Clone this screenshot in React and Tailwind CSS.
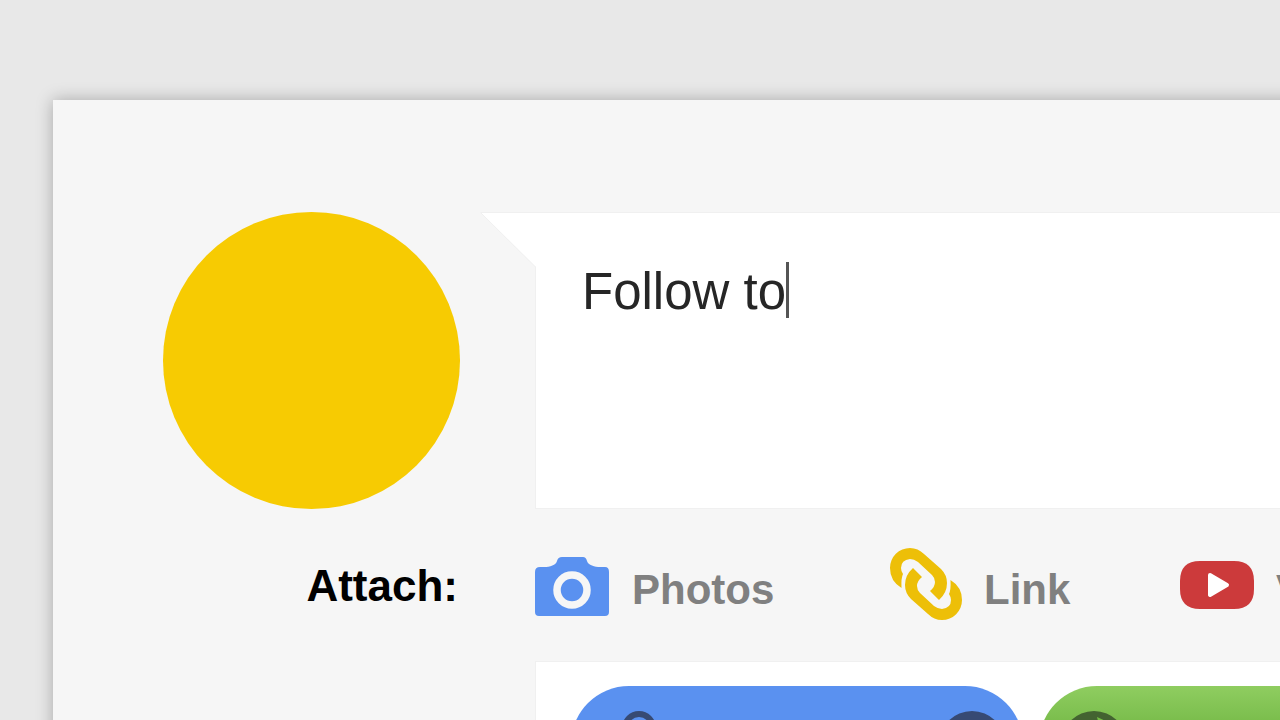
import React, { useState } from 'react';

const CameraIcon = () => (
  <svg viewBox="0 -3 75 63" className="h-[63px] w-[75px]" aria-hidden="true">
    <path
      fill="#5a91f0"
      d="M22 4Q23 0 27 0H48Q51 0 52 4C53 8 60 10 65 10H70Q74 10 74 15V55Q74 59 70 59H4Q0 59 0 55V15Q0 10 5 10H9C15 10 21 8 22 4Z"
    />
    <circle cx="37" cy="33" r="15" fill="none" stroke="#f6f6f6" strokeWidth="7.5" />
  </svg>
);

const LinkIcon = () => (
  <svg viewBox="0 1 73 75" className="h-[75px] w-[73px]" aria-hidden="true">
    <g fill="#edbf08">
      <path
        id="chain"
        d="M12.500 41Q1 34 1 21A20 20 0 0 1 21 1Q29 1 35 7L52 22Q58 28 58 36Q58 46 50 53L41 44Q46 40 46 35Q46 31 43 28L29 15Q25 12 21 12Q12 13 12 21Q12 24 14 27Q12 31 12.500 41Z"
      />
      <use href="#chain" transform="rotate(180 37 37)" />
    </g>
  </svg>
);

const VideoIcon = () => (
  <svg viewBox="0 0 74 48" className="h-12 w-[74px]" aria-hidden="true">
    <path
      fill="#cc3a3b"
      d="M20 0H54Q74 0 74 20V28Q74 48 54 48H20Q0 48 0 28V20Q0 0 20 0Z"
    />
    <path d="M30 14L47 24L30 34Z" fill="#fff" stroke="#fff" strokeWidth="4" strokeLinejoin="round" />
  </svg>
);

const PersonIcon = () => (
  <svg viewBox="0 0 66 66" className="size-[66px]" aria-hidden="true">
    <circle cx="33" cy="17" r="14" fill="none" stroke="#374a73" strokeWidth="6" />
    <path d="M6 66Q8 40 33 40T60 66" fill="none" stroke="#374a73" strokeWidth="6" />
  </svg>
);

const CloseIcon = () => (
  <svg viewBox="0 0 66 66" className="size-[66px]" aria-hidden="true">
    <circle cx="33" cy="33" r="33" fill="#374a73" />
    <path d="M22 22L44 44M44 22L22 44" stroke="#5a91f0" strokeWidth="7" />
  </svg>
);

const GlobeIcon = () => (
  <svg viewBox="0 0 66 66" className="size-[66px]" aria-hidden="true">
    <circle cx="33" cy="33" r="33" fill="#436331" />
    <path d="M36 6L49 12L41 17L44 24L32 30L22 40L12 30L20 18L38 14Z" fill="#74bd43" />
  </svg>
);

const attachments = [
  { name: 'Photos', icon: <CameraIcon />, className: 'w-[354px]' },
  { name: 'Link', icon: <LinkIcon />, className: 'w-[291px]' },
  { name: 'Video', icon: <VideoIcon />, className: '' },
];

export default function App() {
  const [post, setPost] = useState('Follow to');

  return (
    <div className="h-screen overflow-hidden bg-[#e8e8e8] pt-[100px] pl-[53px] font-['Liberation_Sans',Arial,sans-serif]">
      <main className="-mr-8 grid min-h-full grid-cols-[298px_1fr] content-start gap-x-[74px] bg-[#f6f6f6] pt-28 pl-[110px] shadow-[0_0_16px_rgba(0,0,0,0.28)]">
        <div className="size-[297px] rounded-full bg-[#f7cb02]" />

        {/* Message bubble */}
        <div className="relative h-[297px] border border-r-0 border-[#f0f0f0] bg-white pt-[49px] pl-[46px]">
          <svg viewBox="0 0 57 56" className="absolute -top-px -left-[56px] h-[56px] w-[57px]" aria-hidden="true">
            <path d="M0 0H57V56Z" fill="#fff" />
            <path d="M57 .5H.5L56 55.5" fill="none" stroke="#f0f0f0" />
          </svg>
          <div className="flex items-start">
            <textarea
              aria-label="Message"
              rows={1}
              value={post}
              onChange={(e) => setPost(e.target.value)}
              className="field-sizing-content resize-none overflow-hidden whitespace-nowrap text-[51px] leading-[60px] text-[#262626] outline-none"
            />
            <span className="h-14 w-[3px] bg-[#555]" />
          </div>
        </div>

        {/* Attachment types */}
        <h2 className="flex h-[152px] items-center justify-end pt-[2px] pr-[3px] text-[44px] font-bold text-black">Attach:</h2>
        <div className="flex h-[152px] items-center overflow-hidden">
          {attachments.map((item) => (
            <button
              key={item.name}
              type="button"
              className={`flex shrink-0 items-center gap-[22px] text-[42px] font-bold text-[#808080] ${item.className}`}
            >
              {item.icon}
              <span className="pt-2">{item.name}</span>
            </button>
          ))}
        </div>

        {/* Audience chips */}
        <div className="col-start-2 flex gap-4 overflow-hidden border border-r-0 border-[#f0f0f0] bg-white py-6 pl-[35px]">
          <button
            type="button"
            aria-label="People"
            className="flex h-[116px] w-[452px] shrink-0 items-center justify-between rounded-full bg-[#5a91f0] pr-[18px] pl-[35px]"
          >
            <PersonIcon />
            <CloseIcon />
          </button>
          <button
            type="button"
            aria-label="Public"
            className="flex h-[116px] w-[452px] shrink-0 items-center rounded-full bg-linear-to-b from-[#8fcd60] to-[#4a9a14] pl-[22px]"
          >
            <GlobeIcon />
          </button>
        </div>
      </main>
    </div>
  );
}
